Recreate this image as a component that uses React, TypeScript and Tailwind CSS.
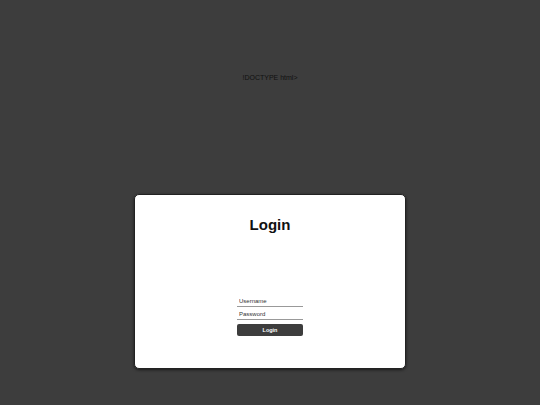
export default function App() {
  return (
    <div className="h-[405px] w-[540px] overflow-hidden bg-[#3d3d3d] font-['Liberation_Sans',Arial,sans-serif]">
      <div className="pt-[74px] text-center text-[7px] leading-[8px] text-[#111]">!DOCTYPE html&gt;</div>
      <div className="mx-auto mt-[112px] h-[175px] w-[272px] rounded-[5px] border border-[#222] bg-white shadow-[0_1px_3px_rgba(0,0,0,0.6)]">
        <h1 className="mt-[21px] text-center text-[15px] font-bold leading-[18px] text-[#111]">Login</h1>
        <form className="mx-auto mt-[62px] flex w-[66px] flex-col">
          <input
            placeholder="Username"
            className="h-[11px] w-full border-b border-[#999] px-[2px] text-[6px] leading-[10px] text-[#333] outline-none placeholder:text-[#333]"
          />
          <input
            type="password"
            placeholder="Password"
            className="mt-[2px] h-[11px] w-full border-b border-[#999] px-[2px] text-[6px] leading-[10px] text-[#333] outline-none placeholder:text-[#333]"
          />
          <button
            type="button"
            className="mt-[4px] h-[12px] w-full rounded-[2px] bg-[#3d3d3d] text-[5.5px] font-bold leading-[12px] text-white"
          >
            Login
          </button>
        </form>
      </div>
    </div>
  );
}
